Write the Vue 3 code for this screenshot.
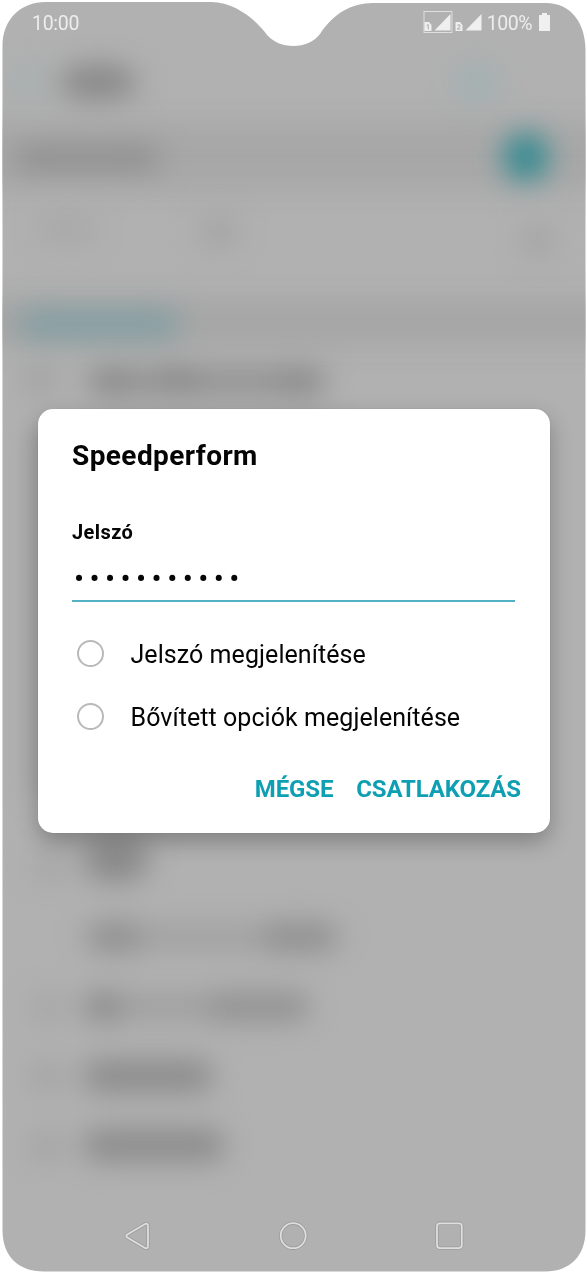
<script setup>
import { ref } from 'vue'

const network = ref('Speedperform')
const password = ref('•••••••••••')
const options = ref([
  { id: 'show', label: 'Jelszó megjelenítése' },
  { id: 'advanced', label: 'Bővített opciók megjelenítése' },
])
</script>

<template>
  <main class="phone">
    <!-- Dimmed, blurred settings screen behind the dialog -->
    <svg class="backdrop" width="587" height="1272" viewBox="0 0 587 1272" aria-hidden="true">
      <defs>
        <clipPath id="screen">
          <path d="M46 2H211C234 2 253 18 264 31C271 42 283 46 293.500 46C304 46 314 42 320 34C333 14 351 3 373 3H546C571 3 585.500 23 585.500 50V1230C585.500 1256 570 1271.500 545 1271.500H44C18 1271.500 2.500 1256 2.500 1230V46C2.500 20 20 2 46 2Z" />
        </clipPath>
        <filter id="soft" x="-100" y="0" width="800" height="1272" filterUnits="userSpaceOnUse" color-interpolation-filters="sRGB"><feGaussianBlur stdDeviation="14" /></filter>
      </defs>
      <g clip-path="url(#screen)">
        <rect width="587" height="1272" fill="#b1b1b1" />
        <g filter="url(#soft)">
          <rect x="-60" y="122" width="710" height="68" fill="#a7a7a7" />
          <rect x="-60" y="298" width="710" height="48" fill="#a6a6a6" />
        </g>
        <g filter="url(#soft)">
          <rect x="14" y="66" width="28" height="30" fill="#9fb0b2" opacity=".6" />
          <ellipse cx="98" cy="82" rx="40" ry="18" fill="#888" />
          <ellipse cx="477" cy="83" rx="20" ry="18" fill="#97b0b3" opacity=".7" />
          <rect x="14" y="146" width="146" height="24" rx="12" fill="#8e8e8e" />
          <ellipse cx="526" cy="157" rx="23" ry="24" fill="#348a91" />
          <rect x="38" y="217" width="58" height="24" fill="#a7a7a7" />
          <rect x="200" y="216" width="38" height="32" rx="14" fill="#a4a4a4" />
          <rect x="522" y="226" width="32" height="30" rx="14" fill="#a3a3a3" />
          <rect x="18" y="310" width="160" height="28" rx="12" fill="#829ea2" />
          <rect x="24" y="366" width="32" height="28" fill="#a2a2a2" />
          <rect x="86" y="368" width="240" height="27" rx="10" fill="#919191" />
          <rect x="98" y="368" width="30" height="27" fill="#777" opacity=".4" />
          <rect x="164" y="366" width="28" height="27" fill="#747474" opacity=".4" />
          <rect x="282" y="368" width="34" height="27" fill="#777" opacity=".4" />
          <rect x="24" y="430" width="32" height="365" fill="#a0a0a0" opacity=".5" />
          <rect x="34" y="854" width="32" height="26" fill="#a5a5a5" />
          <ellipse cx="116" cy="860" rx="34" ry="22" fill="#888" />
          <rect x="84" y="924" width="256" height="26" rx="12" fill="#a1a1a1" />
          <rect x="90" y="922" width="50" height="30" rx="12" fill="#7c7c7c" opacity=".5" />
          <rect x="262" y="922" width="74" height="30" rx="14" fill="#7e7e7e" opacity=".5" />
          <rect x="32" y="994" width="34" height="26" fill="#a5a5a5" />
          <rect x="82" y="993" width="228" height="27" rx="12" fill="#9f9f9f" />
          <rect x="86" y="992" width="34" height="30" rx="12" fill="#747474" opacity=".5" />
          <rect x="208" y="992" width="100" height="30" rx="12" fill="#838383" opacity=".5" />
          <rect x="30" y="1064" width="34" height="26" fill="#a3a3a3" />
          <rect x="84" y="1060" width="128" height="32" rx="12" fill="#8b8b8b" />
          <rect x="30" y="1133" width="34" height="26" fill="#a3a3a3" />
          <rect x="84" y="1129" width="140" height="32" rx="12" fill="#8b8b8b" />
        </g>
      </g>
    </svg>

    <header class="status">
      <span class="time">10:00</span>
      <div class="indicators">
        <svg class="signals" width="62" height="24" viewBox="0 0 62 24" aria-hidden="true">
          <rect x="1" y="1.500" width="28" height="21" fill="none" stroke="#dedede" stroke-width="1" />
          <path d="M1.500 12h4.500l2.500 3v6h-7zM11.500 20.500L27.500 4v16.500zM32.500 12h4.500l2.500 3v6h-7zM42.500 20.500L58.500 4v16.500z" fill="#efefef" />
          <path d="M3.700 15.500l1.500-1v5M34.300 15.300q3-1.500 2.800.600-.300 1.500-2.800 3.100h3.200" fill="none" stroke="#aaa" />
        </svg>
        <span class="percent">100%</span>
        <svg class="battery" width="11" height="19" viewBox="0 0 11 19" aria-hidden="true">
          <path d="M3 0h5v2h3v15.500q0 .5-.5.500H.5q-.5 0-.5-.5V2h3z" fill="#f0f0f0" />
        </svg>
      </div>
    </header>

    <section class="dialog" role="dialog" aria-labelledby="net">
      <h1 id="net">{{ network }}</h1>
      <div class="label">Jelszó</div>
      <div class="field"><span class="dots">{{ password }}</span></div>
      <div v-for="o in options" :key="o.id" class="option">
        <i class="radio"></i><span class="text">{{ o.label }}</span>
      </div>
      <div class="actions">
        <button>MÉGSE</button>
        <button>CSATLAKOZÁS</button>
      </div>
    </section>

    <nav class="nav">
      <svg width="32" height="32" viewBox="0 0 32 32" aria-hidden="true">
        <path class="shade" d="M6.300 14.500L24 4q3-1 3 2v20q0 3-3 2L6.300 17.500q-2-1.500 0-3z" />
        <path class="line" d="M6.300 14.500L24 4q3-1 3 2v20q0 3-3 2L6.300 17.500q-2-1.500 0-3z" />
      </svg>
      <svg width="32" height="32" viewBox="0 0 32 32" aria-hidden="true">
        <circle class="shade" cx="16.200" cy="15.700" r="12.500" />
        <circle class="line" cx="16.200" cy="15.700" r="12.500" />
      </svg>
      <svg width="32" height="32" viewBox="0 0 32 32" aria-hidden="true">
        <rect class="shade" x="4" y="3.300" width="24.800" height="24.800" rx="3" />
        <rect class="line" x="4" y="3.300" width="24.800" height="24.800" rx="3" />
      </svg>
    </nav>
  </main>
</template>

<style>
body { margin: 0; background: #fff; }
</style>

<style scoped>
.phone {
  position: relative;
  width: 587px;
  height: 1272px;
  box-sizing: border-box;
  overflow: hidden;
  display: flex;
  flex-direction: column;
  font-family: Roboto, "Liberation Sans", sans-serif;
}
.backdrop { position: absolute; inset: 0; }
.status, .dialog, .nav { position: relative; }
.status {
  height: 46px;
  display: flex;
  justify-content: space-between;
  box-sizing: border-box;
  padding: 0 37px 0 32px;
  color: #ededed;
  font-size: 19.5px;
  letter-spacing: -.3px;
  line-height: 47px;
}
.indicators { display: flex; }
.signals { margin-top: 10px; }
.percent { margin-left: 2px; letter-spacing: -.5px; }
.battery { margin: 13px 0 0 7px; }
.dialog {
  width: 512px;
  height: 424px;
  margin: 363px 0 0 37.5px;
  padding: 0 34.5px;
  box-sizing: border-box;
  background: #fff;
  border-radius: 15px;
  box-shadow: 0 9px 22px rgba(0, 0, 0, .27), 0 0 2px rgba(0, 0, 0, .1);
  color: #050505;
}
h1 { margin: 0; height: 94px; line-height: 94px; font-size: 28px; font-weight: 700; letter-spacing: .42px; white-space: nowrap; }
.label { height: 58px; line-height: 58px; font-size: 20px; font-weight: 700; letter-spacing: .4px; }
.field { height: 39px; border-bottom: 2px solid #52b1c3; line-height: 36px; }
.dots { font-size: 30px; letter-spacing: 5.4px; margin-left: 2px; }
.option { height: 63px; display: flex; align-items: center; font-size: 25px; letter-spacing: .06px; white-space: nowrap; }
.field + .option { margin-top: 20px; }
.radio { box-sizing: border-box; width: 27px; height: 27px; margin: 0 26.5px 0 5px; border: 2px solid #b9b9b9; border-radius: 50%; }
.text { padding-top: 2px; }
.actions { display: flex; justify-content: flex-end; gap: 23px; height: 82px; margin-right: -6px; }
button { padding: 0; border: 0; background: none; font: 700 24px Roboto, "Liberation Sans", sans-serif; letter-spacing: -.13px; color: #0f9fb3; }
.nav { margin-top: 387px; display: flex; gap: 124px; padding-left: 121px; }
.nav path, .nav circle, .nav rect { fill: none; }
.shade { stroke: #9c9c9c; stroke-width: 3.4; }
.line { stroke: #dedede; stroke-width: 1.8; }
</style>
